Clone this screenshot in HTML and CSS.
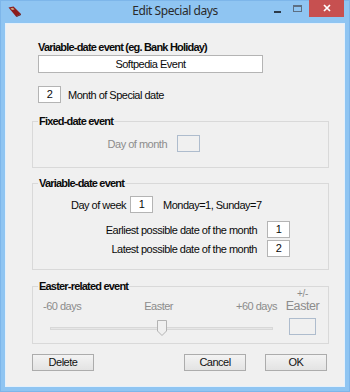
FILE: index.html
```html
<!DOCTYPE html>
<html>
<head>
<meta charset="utf-8">
<link rel="stylesheet" href="styles.css">
</head>
<body>
<div class="window">
  <div class="titlebar">
    <div class="tb-left">
      <svg class="app-icon" width="14" height="11" viewBox="0 0 14 11">
        <polygon points="0.5,1.5 5.5,0.5 13,8 8,10.5" fill="#8c1c1c"/>
        <polygon points="8,10.5 13,8 13,9 8.5,11" fill="#5a0e0e"/>
        <polygon points="2.5,2.2 5,1.8 6.5,3.5 4,4" fill="#c9a27a"/>
      </svg>
    </div>
    <div class="title">Edit Special days</div>
    <div class="controls">
      <span class="ctl ctl-min"><span class="min-glyph"></span></span>
      <span class="ctl ctl-max"><span class="max-glyph"></span></span>
      <span class="ctl ctl-close">
        <svg width="8" height="8" viewBox="0 0 8 8"><path d="M1 1 L7 7 M7 1 L1 7" stroke="#fff" stroke-width="1.7"/></svg>
      </span>
    </div>
  </div>
  <div class="client">
    <div class="top">
      <div class="bold-label">Variable-date event (eg. Bank Holiday)</div>
      <div class="textfield">Softpedia Event</div>
      <div class="row month-row">
        <span class="field">2</span>
        <span class="month-label">Month of Special date</span>
      </div>
    </div>

    <fieldset class="group group-fixed">
      <legend>Fixed-date event</legend>
      <div class="row fixed-row">
        <span class="lbl lbl-fixed disabled">Day of month</span>
        <span class="field field-disabled"></span>
      </div>
    </fieldset>

    <fieldset class="group group-var">
      <legend>Variable-date event</legend>
      <div class="row dow-row">
        <span class="lbl lbl-dow">Day of week</span>
        <span class="field">1</span>
        <span class="dow-hint">Monday=1, Sunday=7</span>
      </div>
      <div class="row earliest-row">
        <span class="lbl lbl-wide">Earliest possible date of the month</span>
        <span class="field">1</span>
      </div>
      <div class="row latest-row">
        <span class="lbl lbl-wide">Latest possible date of the month</span>
        <span class="field">2</span>
      </div>
    </fieldset>

    <fieldset class="group group-easter">
      <legend>Easter-related event</legend>
      <div class="easter">
        <div class="easter-left">
          <div class="scale disabled">
            <span>-60 days</span>
            <span>Easter</span>
            <span>+60 days</span>
          </div>
          <div class="slider">
            <div class="track"></div>
            <svg class="thumb" width="10" height="16" viewBox="0 0 10 16">
              <polygon points="0.5,0.5 9.5,0.5 9.5,11 5,15.5 0.5,11" fill="#f0f0f0" stroke="#b3b3b3"/>
            </svg>
          </div>
        </div>
        <div class="easter-right disabled">
          <span class="pm">+/-</span>
          <span class="easter-big">Easter</span>
          <span class="field field-disabled field-easter"></span>
        </div>
      </div>
    </fieldset>

    <div class="buttons">
      <span class="btn">Delete</span>
      <span class="spacer"></span>
      <span class="btn">Cancel</span>
      <span class="btn">OK</span>
    </div>
  </div>
</div>
</body>
</html>
```

FILE: styles.css
```css
html, body {
  margin: 0;
  padding: 0;
}
body {
  width: 350px;
  height: 392px;
  overflow: hidden;
  font-family: "Liberation Sans", Arial, sans-serif;
  font-size: 11px;
  letter-spacing: -0.5px;
  color: #0a0a0a;
}
.window {
  width: 350px;
  height: 392px;
  box-sizing: border-box;
  background: #8fc5f2;
  box-shadow: inset 0 0 0 1px #7db6ea;
  display: flex;
  flex-direction: column;
}
.titlebar {
  height: 23px;
  flex: none;
  display: grid;
  grid-template-columns: 1fr auto 1fr;
}
.tb-left {
  display: flex;
  align-items: flex-start;
}
.app-icon {
  margin: 6px 0 0 8px;
  display: block;
}
.title {
  font-family: "Noto Sans", "Open Sans", sans-serif;
  font-size: 12px;
  letter-spacing: -0.45px;
  color: #2a2a2a;
  line-height: 23px;
  margin-top: -1px;
}
.controls {
  display: flex;
  justify-content: flex-end;
  align-items: flex-start;
  padding-right: 6px;
}
.ctl {
  display: flex;
  justify-content: center;
  height: 17px;
}
.ctl-min {
  width: 19px;
}
.min-glyph {
  width: 7px;
  height: 2px;
  margin-top: 11px;
  background: #2b3a4a;
}
.ctl-max {
  width: 21px;
  margin-right: 1px;
}
.max-glyph {
  width: 9px;
  height: 7px;
  margin-top: 5px;
  box-sizing: border-box;
  border: 1px solid #5d6f82;
  border-top-width: 2px;
}
.ctl-close {
  width: 35px;
  background: #c75050;
  align-items: center;
}
.ctl-close svg {
  display: block;
  margin-top: -1px;
}

.client {
  flex: 1;
  margin: 0 5px 5px 5px;
  border: 1px solid #e4f0fb;
  background: #f0f0f0;
  padding: 16px 15px 0 26px;
  display: flex;
  flex-direction: column;
}
.top {
  margin-left: 6px;
}
.bold-label {
  font-weight: bold;
  letter-spacing: -0.8px;
  line-height: 14px;
}
.textfield {
  margin-top: 1px;
  width: 225px;
  height: 18px;
  box-sizing: border-box;
  border: 1px solid #b4b4b4;
  background: #fff;
  text-align: center;
  line-height: 16px;
}
.row {
  display: flex;
  align-items: center;
  line-height: 14px;
}
.month-row {
  margin-top: 13px;
}
.month-label {
  margin-left: 7px;
}
.field {
  width: 23px;
  height: 17px;
  box-sizing: border-box;
  border: 1px solid #b4b4b4;
  background: #fff;
  text-align: center;
  line-height: 15px;
  flex: none;
}
.field-disabled {
  background: #f0f0f0;
  border-color: #aebccd;
}
.disabled {
  color: #8c8c8c;
}

.group {
  margin: 0;
  padding: 0;
  border: 1px solid #d9d9d9;
  min-inline-size: auto;
}
.group legend {
  font-weight: bold;
  letter-spacing: -0.8px;
  line-height: 14px;
  padding: 0 1px;
  margin-left: 5px;
}
.group-fixed {
  margin-top: 11px;
  padding-bottom: 15px;
}
.fixed-row {
  margin-top: 7px;
}
.lbl {
  text-align: right;
  flex: none;
}
.lbl-fixed {
  width: 134px;
  margin-right: 10px;
}
.group-var {
  margin-top: 8px;
  padding-bottom: 12px;
}
.dow-row {
  margin-top: 6px;
}
.lbl-dow {
  width: 93px;
  margin-right: 4px;
}
.dow-hint {
  margin-left: 10px;
}
.earliest-row {
  margin-top: 8px;
}
.latest-row {
  margin-top: 2px;
}
.lbl-wide {
  width: 224px;
  margin-right: 10px;
}

.group-easter {
  margin-top: 9px;
  padding-bottom: 7px;
}
.easter {
  display: flex;
  margin-top: -4px;
  padding-left: 10px;
}
.easter-left {
  width: 234px;
  padding-top: 10px;
}
.scale {
  display: flex;
  justify-content: space-between;
  line-height: 14px;
}
.slider {
  position: relative;
  height: 16px;
  margin: 7px 4px 0 7px;
  display: flex;
  align-items: center;
}
.track {
  width: 100%;
  height: 3px;
  box-sizing: border-box;
  background: #e6e6e6;
  border: 1px solid #d8d8d8;
}
.thumb {
  position: absolute;
  left: 107px;
  top: 0;
  display: block;
}
.easter-right {
  margin-left: 11px;
  width: 29px;
  display: flex;
  flex-direction: column;
  align-items: center;
}
.pm {
  font-size: 10px;
  line-height: 10px;
  letter-spacing: -0.3px;
}
.easter-big {
  font-size: 12.5px;
  line-height: 14px;
  letter-spacing: -0.4px;
}
.field-easter {
  width: 27px;
  margin-top: 5px;
}

.buttons {
  margin-top: 10px;
  margin-right: 2px;
  display: flex;
  gap: 19px;
}
.spacer {
  flex: 1;
}
.btn {
  width: 62px;
  height: 17px;
  box-sizing: border-box;
  border: 1px solid #acacac;
  background: linear-gradient(#f3f3f3, #e3e3e3);
  text-align: center;
  line-height: 15px;
  color: #111;
}
```
